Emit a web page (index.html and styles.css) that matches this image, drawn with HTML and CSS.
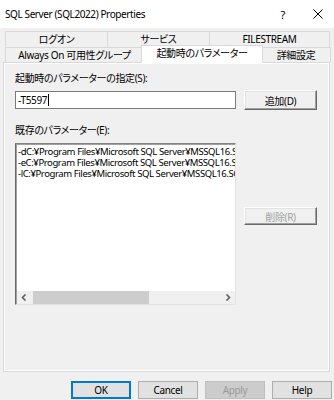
FILE: index.html
```html
<!DOCTYPE html>
<html lang="ja">
<head>
  <meta charset="UTF-8">
  <title>SQL Server (SQL2022) Properties</title>
  <link rel="stylesheet" href="styles.css">
</head>
<body>
  <div class="dialog">
    <div class="titlebar">
      <span class="title">SQL Server (SQL2022) Properties</span>
      <span class="qmark">?</span>
      <svg class="close" width="10" height="10" viewBox="0 0 10 10">
        <path d="M0.5 0.5 L9.5 9.5 M9.5 0.5 L0.5 9.5" stroke="#000" stroke-width="1" fill="none"/>
      </svg>
    </div>

    <div class="tabs">
      <div class="tab-row back">
        <div class="tab t-logon">ログオン</div>
        <div class="tab t-service">サービス</div>
        <div class="tab t-fs">FILESTREAM</div>
      </div>
      <div class="tab-row front">
        <div class="tab t-ao">Always On 可用性グループ</div>
        <div class="tab t-start selected">起動時のパラメーター</div>
        <div class="tab t-adv">詳細設定</div>
      </div>
    </div>

    <div class="panel">
      <div class="label first">起動時のパラメーターの指定(S):</div>
      <div class="row add-row">
        <div class="textbox"><span>-T5597</span><span class="caret"></span></div>
        <button class="classic">追加(D)</button>
      </div>

      <div class="label second">既存のパラメーター(E):</div>
      <div class="row list-row">
        <div class="listbox">
          <div class="items">
            <div class="item">-dC:¥Program Files¥Microsoft SQL Server¥MSSQL16.SQL2022¥MSSQL¥DATA¥master.mdf</div>
            <div class="item">-eC:¥Program Files¥Microsoft SQL Server¥MSSQL16.SQL2022¥MSSQL¥Log¥ERRORLOG</div>
            <div class="item">-lC:¥Program Files¥Microsoft SQL Server¥MSSQL16.SQL2022¥MSSQL¥DATA¥mastlog.ldf</div>
          </div>
          <div class="hscroll">
            <span class="arrow">
              <svg width="6" height="7" viewBox="0 0 6 7"><path d="M4.5 0.5 L1.5 3.5 L4.5 6.5" stroke="#606060" stroke-width="1.6" fill="none"/></svg>
            </span>
            <div class="track"><div class="thumb"></div></div>
            <span class="arrow">
              <svg width="6" height="7" viewBox="0 0 6 7"><path d="M1.5 0.5 L4.5 3.5 L1.5 6.5" stroke="#606060" stroke-width="1.6" fill="none"/></svg>
            </span>
          </div>
        </div>
        <button class="classic disabled">削除(R)</button>
      </div>
    </div>

    <div class="footer">
      <button class="btn default">OK</button>
      <button class="btn">Cancel</button>
      <button class="btn off">Apply</button>
      <button class="btn">Help</button>
    </div>
  </div>
</body>
</html>
```

FILE: styles.css
```css
body {
  margin: 0;
  background-color: #f0f0f0;
  font-family: "Noto Sans", "Noto Sans CJK JP", sans-serif;
  font-size: 10px;
  letter-spacing: -0.35px;
  font-feature-settings: "palt";
  color: #000;
}
.dialog {
  width: 334px;
  height: 400px;
  overflow: hidden;
}
.titlebar {
  height: 28px;
  background-color: #ffffff;
  display: flex;
  align-items: center;
  padding-left: 5px;
  margin-bottom: 3px;
}
.title {
  flex: 1;
  font-size: 10px;
  letter-spacing: -0.4px;
}
.qmark {
  font-size: 11px;
  margin-right: 28px;
}
.close {
  margin-right: 11px;
}

/* tabs */
.tabs {
  padding-left: 5px;
}
.tab-row {
  display: flex;
}
.tab {
  height: 14px;
  line-height: 14px;
  text-align: center;
  background-color: #f0f0f0;
  border: 1px solid #d9d9d9;
  border-bottom: none;
  margin-right: -1px;
  white-space: nowrap;
}
.back .tab {
  height: 15px;
}
.t-logon { width: 101px; }
.t-service { width: 101px; }
.t-fs { width: 119px; }
.t-ao { width: 137px; }
.t-start { width: 116px; }
.t-adv { width: 68px; }
.tab.selected {
  position: relative;
  z-index: 2;
  background-color: #ffffff;
  height: 17px;
  line-height: 15px;
  margin-top: -2px;
  margin-left: -2px;
  margin-right: -2px;
  margin-bottom: -1px;
  width: 120px;
}

/* page */
.panel {
  margin-left: 3px;
  width: 327px;
  height: 310px;
  border: 1px solid #d9d9d9;
  box-shadow: inset 1px 1px 0 #ffffff, inset -1px -1px 0 #ffffff;
  padding: 8px 12px 0 11px;
  box-sizing: border-box;
}
.label {
  height: 14px;
  line-height: 14px;
}
.label.second {
  margin-top: 13px;
}
.row {
  display: flex;
  justify-content: space-between;
}
.add-row {
  margin-top: 5px;
  align-items: center;
  height: 20px;
}
.textbox {
  width: 221px;
  height: 18px;
  box-sizing: border-box;
  border: 1px solid #7a7a7a;
  background-color: #ffffff;
  padding-left: 2px;
  line-height: 16px;
  display: flex;
  align-items: center;
}
.caret {
  display: inline-block;
  width: 1px;
  height: 12px;
  background-color: #000;
  margin-left: 1px;
}
button {
  font-family: inherit;
  font-size: 10px;
  letter-spacing: inherit;
  font-feature-settings: inherit;
  padding: 0;
  margin: 0;
  color: #000;
}
.classic {
  width: 73px;
  height: 20px;
  background-color: #f0f0f0;
  border: 1px solid;
  border-color: #ffffff #696969 #696969 #ffffff;
  box-shadow: inset -1px -1px 0 #a0a0a0, inset 1px 1px 0 #e3e3e3;
}
.classic.disabled {
  color: #a0a0a0;
  height: 18px;
  margin-top: 64px;
}
.list-row {
  margin-top: 6px;
  align-items: flex-start;
}
.listbox {
  width: 221px;
  height: 162px;
  box-sizing: border-box;
  background-color: #ffffff;
  border: 1px solid;
  border-color: #828282 #e3e3e3 #e3e3e3 #696969;
  box-shadow: inset 1px 1px 0 #a0a0a0;
  display: flex;
  flex-direction: column;
  overflow: hidden;
}
.items {
  flex: 1;
  padding: 2px 0 0 2px;
  overflow: hidden;
}
.item {
  white-space: nowrap;
  line-height: 11px;
  font-size: 9.5px;
  letter-spacing: -0.4px;
}
.hscroll {
  height: 13px;
  margin-left: 1px;
  display: flex;
  align-items: center;
  background-color: #f0f0f0;
}
.arrow {
  width: 14px;
  display: flex;
  justify-content: center;
}
.track {
  flex: 1;
  height: 13px;
}
.thumb {
  width: 116px;
  height: 13px;
  margin-left: 2px;
  background-color: #cdcdcd;
}

/* buttons */
.footer {
  display: flex;
  justify-content: flex-end;
  gap: 7px;
  padding-right: 2px;
  margin-top: 9px;
}
.btn {
  width: 60px;
  height: 18px;
  background-color: #e1e1e1;
  border: 1px solid #adadad;
}
.btn.default {
  border-color: #0078d7;
  box-shadow: inset 0 0 0 1px #0078d7;
}
.btn.off {
  background-color: #cccccc;
  border-color: #bfbfbf;
  color: #9a9a9a;
}
```
